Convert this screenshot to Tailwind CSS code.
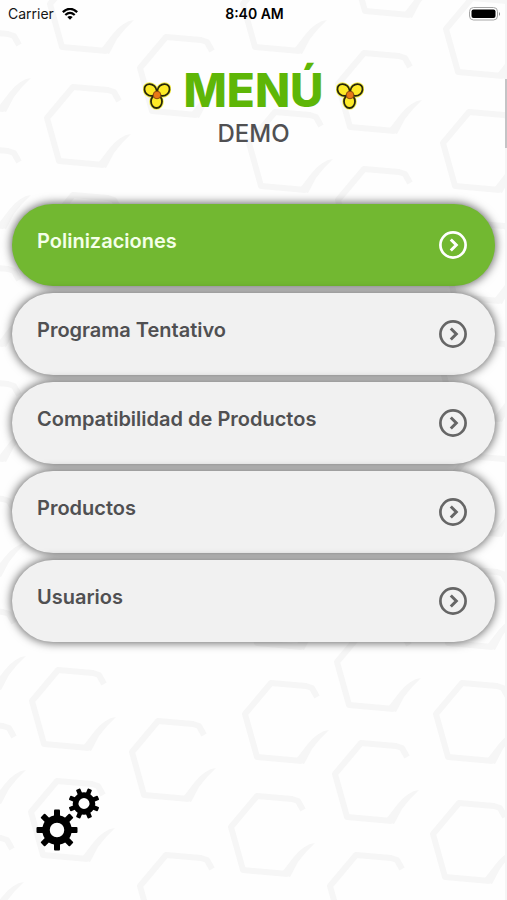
<!DOCTYPE html>
<html lang="es">
<head>
<meta charset="utf-8">
<meta name="viewport" content="width=device-width, initial-scale=1">
<title>Menú</title>
<script src="https://cdn.jsdelivr.net/npm/@tailwindcss/browser@4"></script>
</head>
<body class="bg-[#fefefe] font-['Inter','Liberation_Sans',sans-serif] text-[#505052]">
<div class="relative isolate flex min-h-screen flex-col overflow-hidden">
  <!-- Honeycomb backdrop -->
  <svg class="absolute inset-0 -z-10 size-full" aria-hidden="true">
    <defs>
      <g id="hex">
        <path d="M47 15L42 6L36 4L1 1L-25 32L-13 75L32 79" fill="none" stroke="#f6f6f6" stroke-width="6" stroke-linejoin="round"/>
        <path d="M27 76L37 63Q48 49 59 48Q49 57 42 67L34 82L27 80Z" fill="#f6f6f6"/>
      </g>
    </defs>
    <use href="#hex" x="75" y="-28"/><use href="#hex" x="268" y="-28"/><use href="#hex" x="378" y="-64"/><use href="#hex" x="471" y="-3"/>
    <use href="#hex" x="165" y="36"/><use href="#hex" x="-28" y="30"/><use href="#hex" x="363" y="52"/><use href="#hex" x="72" y="86"/>
    <use href="#hex" x="274" y="111"/><use href="#hex" x="468" y="111"/><use href="#hex" x="-28" y="147"/><use href="#hex" x="363" y="168"/>
    <use href="#hex" x="72" y="194"/><use href="#hex" x="468" y="222"/><use href="#hex" x="-28" y="265"/><use href="#hex" x="468" y="340"/>
    <use href="#hex" x="-28" y="380"/><use href="#hex" x="468" y="455"/><use href="#hex" x="-33" y="495"/><use href="#hex" x="461" y="568"/>
    <use href="#hex" x="-33" y="608"/><use href="#hex" x="270" y="568"/><use href="#hex" x="362" y="630"/><use href="#hex" x="57" y="669"/><use href="#hex" x="157" y="720"/>
    <use href="#hex" x="270" y="682"/><use href="#hex" x="461" y="682"/><use href="#hex" x="-33" y="722"/><use href="#hex" x="360" y="742"/>
    <use href="#hex" x="56" y="780"/><use href="#hex" x="256" y="795"/><use href="#hex" x="458" y="802"/><use href="#hex" x="-35" y="834"/>
    <use href="#hex" x="165" y="854"/><use href="#hex" x="355" y="854"/>
  </svg>

  <!-- Status bar -->
  <div class="grid h-7 grid-cols-3 items-center pr-1.5 pl-2 text-sm leading-7 text-[#151515]">
    <div class="flex items-center gap-2">
      <span>Carrier</span>
      <svg class="h-3 w-4" viewBox="0 0 16 12" fill="none" stroke="#000" stroke-width="2.3" aria-label="Wi-Fi" role="img">
        <path d="M.8 4.1Q8-2.3 15.2 4.1M3.3 7Q8 2.8 12.7 7"/><path d="M8 11.8L5.3 9Q8 6.8 10.7 9Z" fill="#000" stroke="none"/>
      </svg>
    </div>
    <span class="text-center text-sm leading-7 font-semibold whitespace-nowrap text-black">8:40 AM</span>
    <svg class="h-4 w-8 justify-self-end" viewBox="0 0 32 16" aria-label="Batería" role="img">
      <rect x=".5" y="1.500" width="28" height="12.500" rx="4" fill="#fff" stroke="#a5a5a5"/>
      <rect x="2.500" y="3.500" width="24" height="8.500" rx="2" fill="#000"/>
      <path d="M30 6Q32 8 30 10Z" fill="#888"/>
    </svg>
  </div>

  <!-- Title -->
  <header class="flex flex-col items-center pt-8">
    <div class="flex items-center gap-3">
      <svg class="mt-3 h-7 w-7" viewBox="0 0 28 28" aria-hidden="true">
        <g id="flower">
          <g fill="#fbe625" stroke="#f4ee50" stroke-width="3.600"><ellipse cx="7.500" cy="8" rx="6.500" ry="5.500" transform="rotate(42 7.500 8)"/><ellipse cx="20.500" cy="8" rx="6.500" ry="5.500" transform="rotate(-42 20.500 8)"/><ellipse cx="13.500" cy="19.500" rx="5.500" ry="6.500"/></g>
          <g fill="#fdea26" stroke="#26260c" stroke-width="1.800"><ellipse cx="7.500" cy="8" rx="6.500" ry="5.500" transform="rotate(42 7.500 8)"/><ellipse cx="20.500" cy="8" rx="6.500" ry="5.500" transform="rotate(-42 20.500 8)"/><ellipse cx="13.500" cy="19.500" rx="5.500" ry="6.500"/></g>
          <circle cx="14" cy="13" r="3.800" fill="#e87816" stroke="#8a4a10" stroke-width="1"/>
        </g>
      </svg>
      <h1 class="text-[46px] leading-[60px] font-extrabold text-[#5eb607]">MENÚ</h1>
      <svg class="mt-3 h-7 w-7" viewBox="0 0 28 28" aria-hidden="true"><use href="#flower"/></svg>
    </div>
    <p class="pt-0.5 text-2xl leading-6 font-medium">DEMO</p>
  </header>

  <!-- Menu entries -->
  <nav class="mt-[58px] px-3" aria-label="Menú">
    <svg class="hidden" aria-hidden="true"><symbol id="go" viewBox="0 0 28 28"><circle cx="14" cy="14" r="12.600" fill="none" stroke="currentColor" stroke-width="2.700"/><path d="M11.800 8.500L17.300 14L11.800 19.500" fill="none" stroke="currentColor" stroke-width="3"/></symbol></svg>
    <ul class="flex flex-col gap-[7px] text-xl leading-7 font-semibold">
      <li><a href="#polinizaciones" class="flex h-[82px] items-center justify-between rounded-[41px] bg-[#72b831] pr-7 pl-[25px] text-[#f4ffe8] shadow-[0_0_10px_1px_rgba(0,0,0,0.6)]"><span class="pb-2">Polinizaciones</span><svg class="size-7 text-white" aria-hidden="true"><use href="#go"/></svg></a></li>
      <li><a href="#programa" class="flex h-[82px] items-center justify-between rounded-[41px] bg-[#f1f1f1] pr-7 pl-[25px] shadow-[0_0_10px_1px_rgba(0,0,0,0.6)]"><span class="pb-2">Programa Tentativo</span><svg class="size-7 text-[#666]" aria-hidden="true"><use href="#go"/></svg></a></li>
      <li><a href="#compatibilidad" class="flex h-[82px] items-center justify-between rounded-[41px] bg-[#f1f1f1] pr-7 pl-[25px] shadow-[0_0_10px_1px_rgba(0,0,0,0.6)]"><span class="pb-2">Compatibilidad de Productos</span><svg class="size-7 text-[#666]" aria-hidden="true"><use href="#go"/></svg></a></li>
      <li><a href="#productos" class="flex h-[82px] items-center justify-between rounded-[41px] bg-[#f1f1f1] pr-7 pl-[25px] shadow-[0_0_10px_1px_rgba(0,0,0,0.6)]"><span class="pb-2">Productos</span><svg class="size-7 text-[#666]" aria-hidden="true"><use href="#go"/></svg></a></li>
      <li><a href="#usuarios" class="flex h-[82px] items-center justify-between rounded-[41px] bg-[#f1f1f1] pr-7 pl-[25px] shadow-[0_0_10px_1px_rgba(0,0,0,0.6)]"><span class="pb-2">Usuarios</span><svg class="size-7 text-[#666]" aria-hidden="true"><use href="#go"/></svg></a></li>
    </ul>
  </nav>

  <!-- Settings -->
  <div class="mt-auto px-9 pb-12">
    <button type="button" aria-label="Configuración" class="block cursor-pointer">
      <svg class="size-16" viewBox="0 0 64 64" aria-hidden="true">
        <defs>
          <g id="cog">
            <circle r="11" fill="none" stroke="#000" stroke-width="7.500"/>
            <g id="teeth"><rect x="-3" y="-20.500" width="6" height="8" rx="1"/><rect x="-3" y="12.500" width="6" height="8" rx="1"/><rect x="-20.500" y="-3" width="8" height="6" rx="1"/><rect x="12.500" y="-3" width="8" height="6" rx="1"/></g>
            <use href="#teeth" transform="rotate(45)"/>
          </g>
        </defs>
        <use href="#cog" transform="translate(21 42)"/>
        <use href="#cog" transform="translate(48 15.500) rotate(22.500) scale(.76)"/>
      </svg>
    </button>
  </div>

  <!-- Scroll indicator -->
  <div class="absolute inset-y-0 right-0 w-0.5 bg-[#f5f5f5]" aria-hidden="true"><div class="mt-[79px] h-[69px] bg-[#c4c4c6]"></div></div>
</div>
</body>
</html>
